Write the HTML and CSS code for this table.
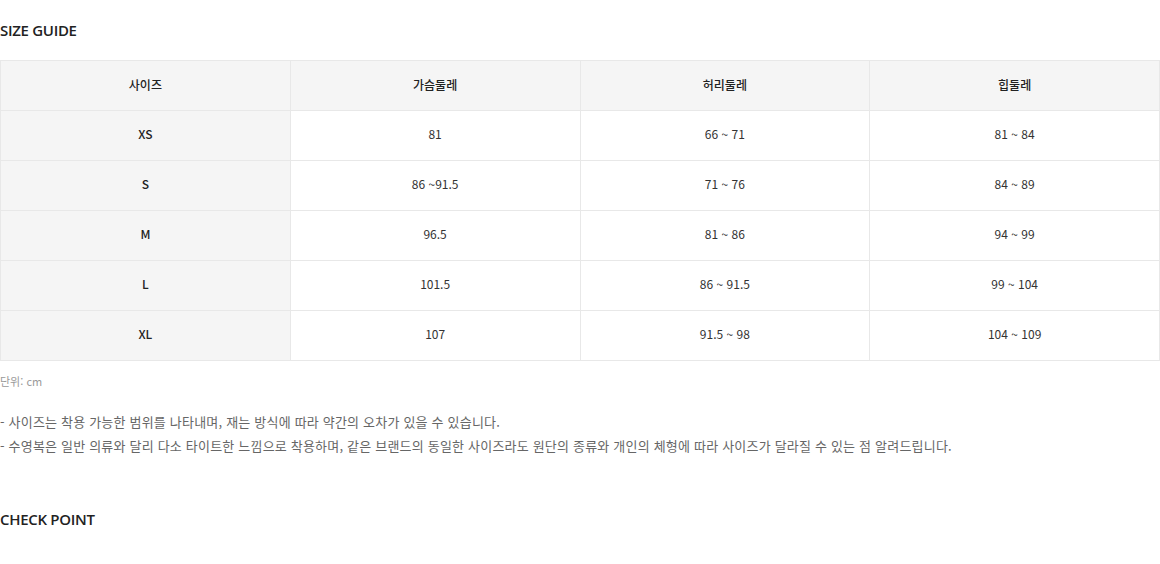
FILE: index.html
```html
<!DOCTYPE html>
<html lang="ko">
<head>
    <meta charset="UTF-8">
    <title>Size Guide</title>
    <link rel="stylesheet" href="styles.css">
</head>
<body>
    <div class="section">
        <h2 class="section-title">SIZE GUIDE</h2>
        <table class="size-table">
            <thead>
                <tr>
                    <th>사이즈</th>
                    <th>가슴둘레</th>
                    <th>허리둘레</th>
                    <th>힙둘레</th>
                </tr>
            </thead>
            <tbody>
                <tr><th>XS</th><td>81</td><td>66 ~ 71</td><td>81 ~ 84</td></tr>
                <tr><th>S</th><td>86 ~91.5</td><td>71 ~ 76</td><td>84 ~ 89</td></tr>
                <tr><th>M</th><td>96.5</td><td>81 ~ 86</td><td>94 ~ 99</td></tr>
                <tr><th>L</th><td>101.5</td><td>86 ~ 91.5</td><td>99 ~ 104</td></tr>
                <tr><th>XL</th><td>107</td><td>91.5 ~ 98</td><td>104 ~ 109</td></tr>
            </tbody>
        </table>
        <p class="unit">단위: cm</p>
        <ul class="notes">
            <li>- 사이즈는 착용 가능한 범위를 나타내며, 재는 방식에 따라 약간의 오차가 있을 수 있습니다.</li>
            <li>- 수영복은 일반 의류와 달리 다소 타이트한 느낌으로 착용하며, 같은 브랜드의 동일한 사이즈라도 원단의 종류와 개인의 체형에 따라 사이즈가 달라질 수 있는 점 알려드립니다.</li>
        </ul>
    </div>

    <div class="section">
        <h2 class="section-title">CHECK POINT</h2>
    </div>
</body>
</html>
```

FILE: styles.css
```css
body {
    margin: 0;
    font-family: "Noto Sans CJK KR", "Noto Sans", sans-serif;
    color: #222;
    background: #fff;
}

.section {
    width: 1160px;
}

.section-title {
    margin: 0;
    padding-top: 20px;
    height: 40px;
    font-family: "Open Sans", "Noto Sans CJK KR", sans-serif;
    font-size: 15px;
    font-weight: 600;
    line-height: 20px;
    color: #222;
    letter-spacing: -0.3px;
}

.size-table {
    width: 100%;
    border-collapse: collapse;
    table-layout: fixed;
    font-size: 12px;
}

.size-table th,
.size-table td {
    height: 45px;
    padding: 0 0 4px;
    border: 1px solid #e8e8e8;
    text-align: center;
    vertical-align: middle;
    color: #333;
}

.size-table thead th {
    height: 47px;
    padding-bottom: 2px;
}

.size-table th {
    background: #f5f5f5;
    font-weight: 500;
    color: #222;
}

.size-table td {
    background: #fff;
    font-weight: 400;
}

.unit {
    margin: 11px 0 0;
    font-size: 11px;
    line-height: 18px;
    color: #999;
}

.notes {
    list-style: none;
    margin: 20px 0 0;
    padding: 0;
    font-size: 13px;
    line-height: 24px;
    letter-spacing: 0.2px;
    color: #666;
}

.section + .section .section-title {
    padding-top: 51px;
}
```
